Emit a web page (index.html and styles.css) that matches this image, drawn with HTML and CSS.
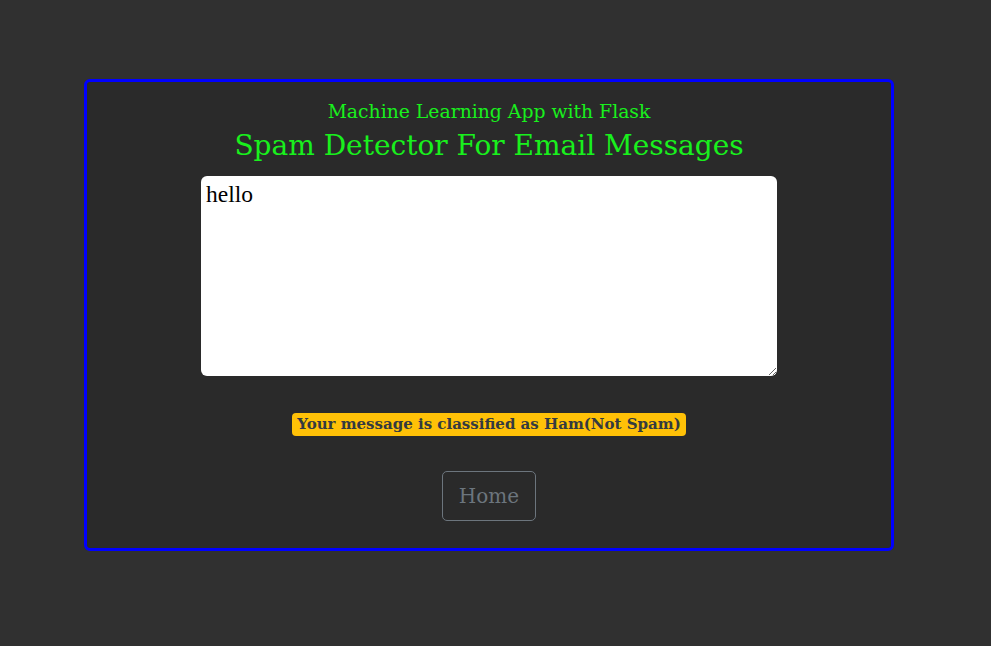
FILE: index.html
```html
<!DOCTYPE html>
<html>
<head>
<meta charset="utf-8">
<link rel="stylesheet" href="styles.css">
</head>
<body>
<div class="card">
  <h2 class="subtitle">Machine Learning App with Flask</h2>
  <h1 class="title">Spam Detector For Email Messages</h1>
  <textarea class="message">hello</textarea>
  <div class="result"><span class="badge">Your message is classified as Ham(Not Spam)</span></div>
  <div class="actions"><a class="home" href="#">Home</a></div>
</div>
</body>
</html>
```
FILE: styles.css
```css
html, body {
  margin: 0;
  padding: 0;
  background: #303030;
}
body {
  font-family: "DejaVu Serif", Georgia, serif;
  padding-top: 79px;
  padding-bottom: 1px;
}
.card {
  box-sizing: border-box;
  width: 810px;
  height: 472px;
  margin-left: 84px;
  border: 3px solid #0000ff;
  border-radius: 6px;
  background: #2a2a2a;
  display: flex;
  flex-direction: column;
  align-items: center;
  padding-top: 16px;
}
.subtitle {
  margin: 0;
  font-weight: normal;
  font-size: 18.8px;
  line-height: 28px;
  color: #19f01d;
}
.title {
  margin: 0;
  font-weight: normal;
  font-size: 28px;
  line-height: 40px;
  color: #19f01d;
}
.message {
  box-sizing: border-box;
  width: 576px;
  height: 200px;
  margin-top: 10px;
  border: none;
  border-radius: 6px;
  background: #fff;
  padding: 5px 5px;
  font-family: "Liberation Serif", serif;
  font-size: 23.5px;
  color: #000;
  resize: vertical;
  outline: none;
}
.result {
  margin-top: 37px;
}
.badge {
  display: inline-block;
  background: #ffc107;
  color: #343a40;
  font-weight: bold;
  font-size: 15px;
  line-height: 23px;
  padding: 0 5px;
  border-radius: 4px;
}
.actions {
  margin-top: 35px;
}
.home {
  display: inline-block;
  box-sizing: border-box;
  width: 94px;
  height: 50px;
  line-height: 48px;
  text-align: center;
  border: 1px solid #6c757d;
  border-radius: 5px;
  color: #6c757d;
  font-size: 20px;
  text-decoration: none;
}
```
